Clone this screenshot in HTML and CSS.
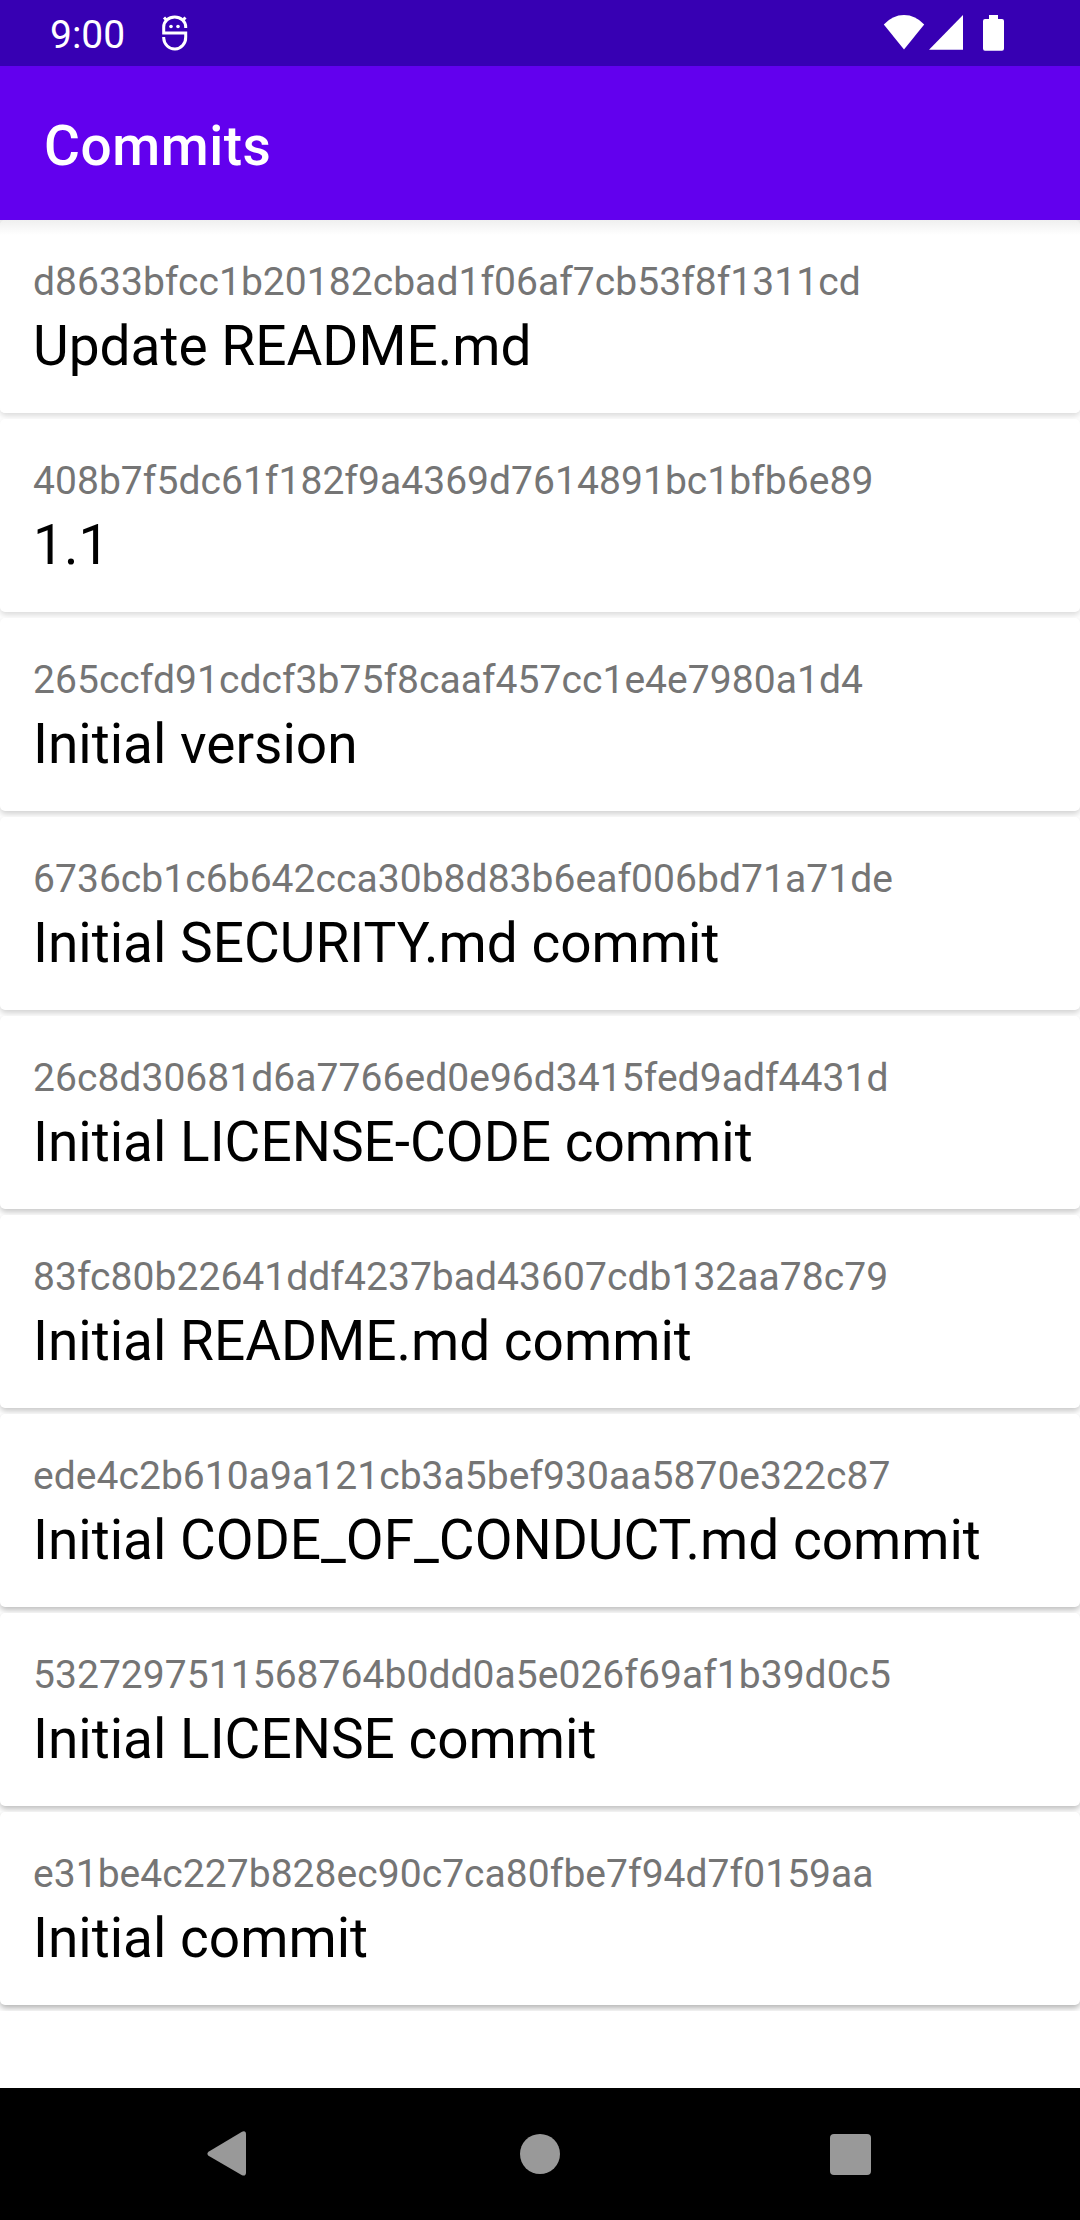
FILE: index.html
```html
<!DOCTYPE html>
<html lang="en">
<head>
<meta charset="utf-8">
<title>Commits</title>
<link rel="stylesheet" href="styles.css">
</head>
<body>
<div class="screen">
  <div class="status-bar">
    <span class="clock">9:00</span>
    <svg class="debug-icon" width="26" height="36" viewBox="0 0 26 36" fill="none" stroke="#fff" stroke-width="3">
      <path d="M23.700 13V12A11 10 0 0 0 1.700 12V18H23.700V22A11 11.500 0 0 1 1.700 23V22"/>
      <path d="M5.500 6 2 2.500M20 6 23.500 2.500"/>
      <g fill="#fff" stroke="none"><circle cx="9" cy="11.500" r="1.800"/><circle cx="16" cy="11.500" r="1.800"/></g>
    </svg>
    <div class="indicators">
      <svg width="42" height="36" viewBox="0 0 42 36" fill="#fff"><path d="M.8 9.500Q9.500 0 21 0T41.200 9.500L21 34.500Z"/></svg>
      <svg class="signal" width="34" height="36" viewBox="0 0 34 36" fill="#fff"><path d="M34 0V34.700H0Z"/></svg>
      <svg class="battery" width="21" height="36" viewBox="0 0 21 36" fill="#fff"><path d="M6 0H15V4H19Q21 4 21 6V33.500Q21 35.700 19 35.700H2Q0 35.700 0 33.500V6Q0 4 2 4H6Z"/></svg>
    </div>
  </div>
  <header class="toolbar"><h1 class="title">Commits</h1></header>
  <main class="list">
    <article class="card"><p class="sha">d8633bfcc1b20182cbad1f06af7cb53f8f1311cd</p><p class="message">Update README.md</p></article>
    <article class="card"><p class="sha">408b7f5dc61f182f9a4369d7614891bc1bfb6e89</p><p class="message">1.1</p></article>
    <article class="card"><p class="sha">265ccfd91cdcf3b75f8caaf457cc1e4e7980a1d4</p><p class="message">Initial version</p></article>
    <article class="card"><p class="sha">6736cb1c6b642cca30b8d83b6eaf006bd71a71de</p><p class="message">Initial SECURITY.md commit</p></article>
    <article class="card"><p class="sha">26c8d30681d6a7766ed0e96d3415fed9adf4431d</p><p class="message">Initial LICENSE-CODE commit</p></article>
    <article class="card"><p class="sha">83fc80b22641ddf4237bad43607cdb132aa78c79</p><p class="message">Initial README.md commit</p></article>
    <article class="card"><p class="sha">ede4c2b610a9a121cb3a5bef930aa5870e322c87</p><p class="message">Initial CODE_OF_CONDUCT.md commit</p></article>
    <article class="card"><p class="sha">5327297511568764b0dd0a5e026f69af1b39d0c5</p><p class="message">Initial LICENSE commit</p></article>
    <article class="card"><p class="sha">e31be4c227b828ec90c7ca80fbe7f94d7f0159aa</p><p class="message">Initial commit</p></article>
  </main>
  <nav class="nav-bar">
    <svg width="44" height="46" viewBox="0 0 44 46" fill="#999"><path d="M2.500 20.700 36 .7Q40 -.7 40 3.500V41.500Q40 45.500 36 44.300L2.500 24.800Q.3 22.700 2.500 20.700Z"/></svg>
    <svg width="40" height="40" viewBox="0 0 40 40" fill="#999"><circle cx="20" cy="20" r="20"/></svg>
    <svg width="41" height="41" viewBox="0 0 41 41" fill="#999"><rect width="41" height="41" rx="4"/></svg>
  </nav>
</div>
</body>
</html>
```

FILE: styles.css
```css
body {
  margin: 0;
  background: #fff;
  font-family: Roboto, sans-serif;
}

h1, p {
  margin: 0;
}

svg {
  display: block;
  flex: none;
}

.screen {
  display: flex;
  flex-direction: column;
  width: 1080px;
  height: 2220px;
  overflow: hidden;
}

.status-bar {
  display: flex;
  flex: none;
  box-sizing: border-box;
  height: 66px;
  padding: 0 76px 0 50px;
  background: #3700b3;
  color: #fff;
}

.clock {
  width: 112px;
  font-size: 39px;
  line-height: 70px;
}

.debug-icon {
  margin-top: 15px;
}

.indicators {
  display: flex;
  margin: 15px 0 0 auto;
}

.signal {
  margin-left: 4px;
}

.battery {
  margin-left: 20px;
}

.toolbar {
  display: flex;
  flex: none;
  align-items: center;
  box-sizing: border-box;
  height: 154px;
  padding: 5px 0 0 44px;
  background: #6200ee;
  color: #fff;
}

.title {
  font-size: 55px;
  font-weight: 500;
  letter-spacing: .55px;
  line-height: 64px;
}

.list {
  display: flex;
  flex: 1;
  flex-direction: column;
  gap: 6px;
  background:
    linear-gradient(rgba(0, 0, 0, .08), transparent) top / 100% 15px no-repeat,
    #fff;
}

.card {
  --shade: .15;
  position: relative;
  box-sizing: border-box;
  height: 193px;
  padding: 39px 33px 0;
  border-radius: 5px;
  background: #fff;
  box-shadow: 0 3px 6px rgba(0, 0, 0, var(--shade));
  clip-path: inset(0 0 -6px);
}

.card:first-child {
  background: linear-gradient(#efefef, #fff 15px);
}

.card:nth-child(n+3) { --shade: .19; }
.card:nth-child(n+5) { --shade: .23; }
.card:nth-child(n+7) { --shade: .27; }
.card:nth-child(n+9) { --shade: .31; }

.sha {
  color: #757575;
  font-size: 39px;
  letter-spacing: .05px;
  line-height: 46px;
}

.message {
  margin-top: 9px;
  color: #000;
  font-size: 55px;
  line-height: 64px;
}

.nav-bar {
  display: flex;
  flex: none;
  align-items: center;
  justify-content: space-between;
  box-sizing: border-box;
  height: 132px;
  padding: 0 209px 0 206px;
  background: #000;
}
```
